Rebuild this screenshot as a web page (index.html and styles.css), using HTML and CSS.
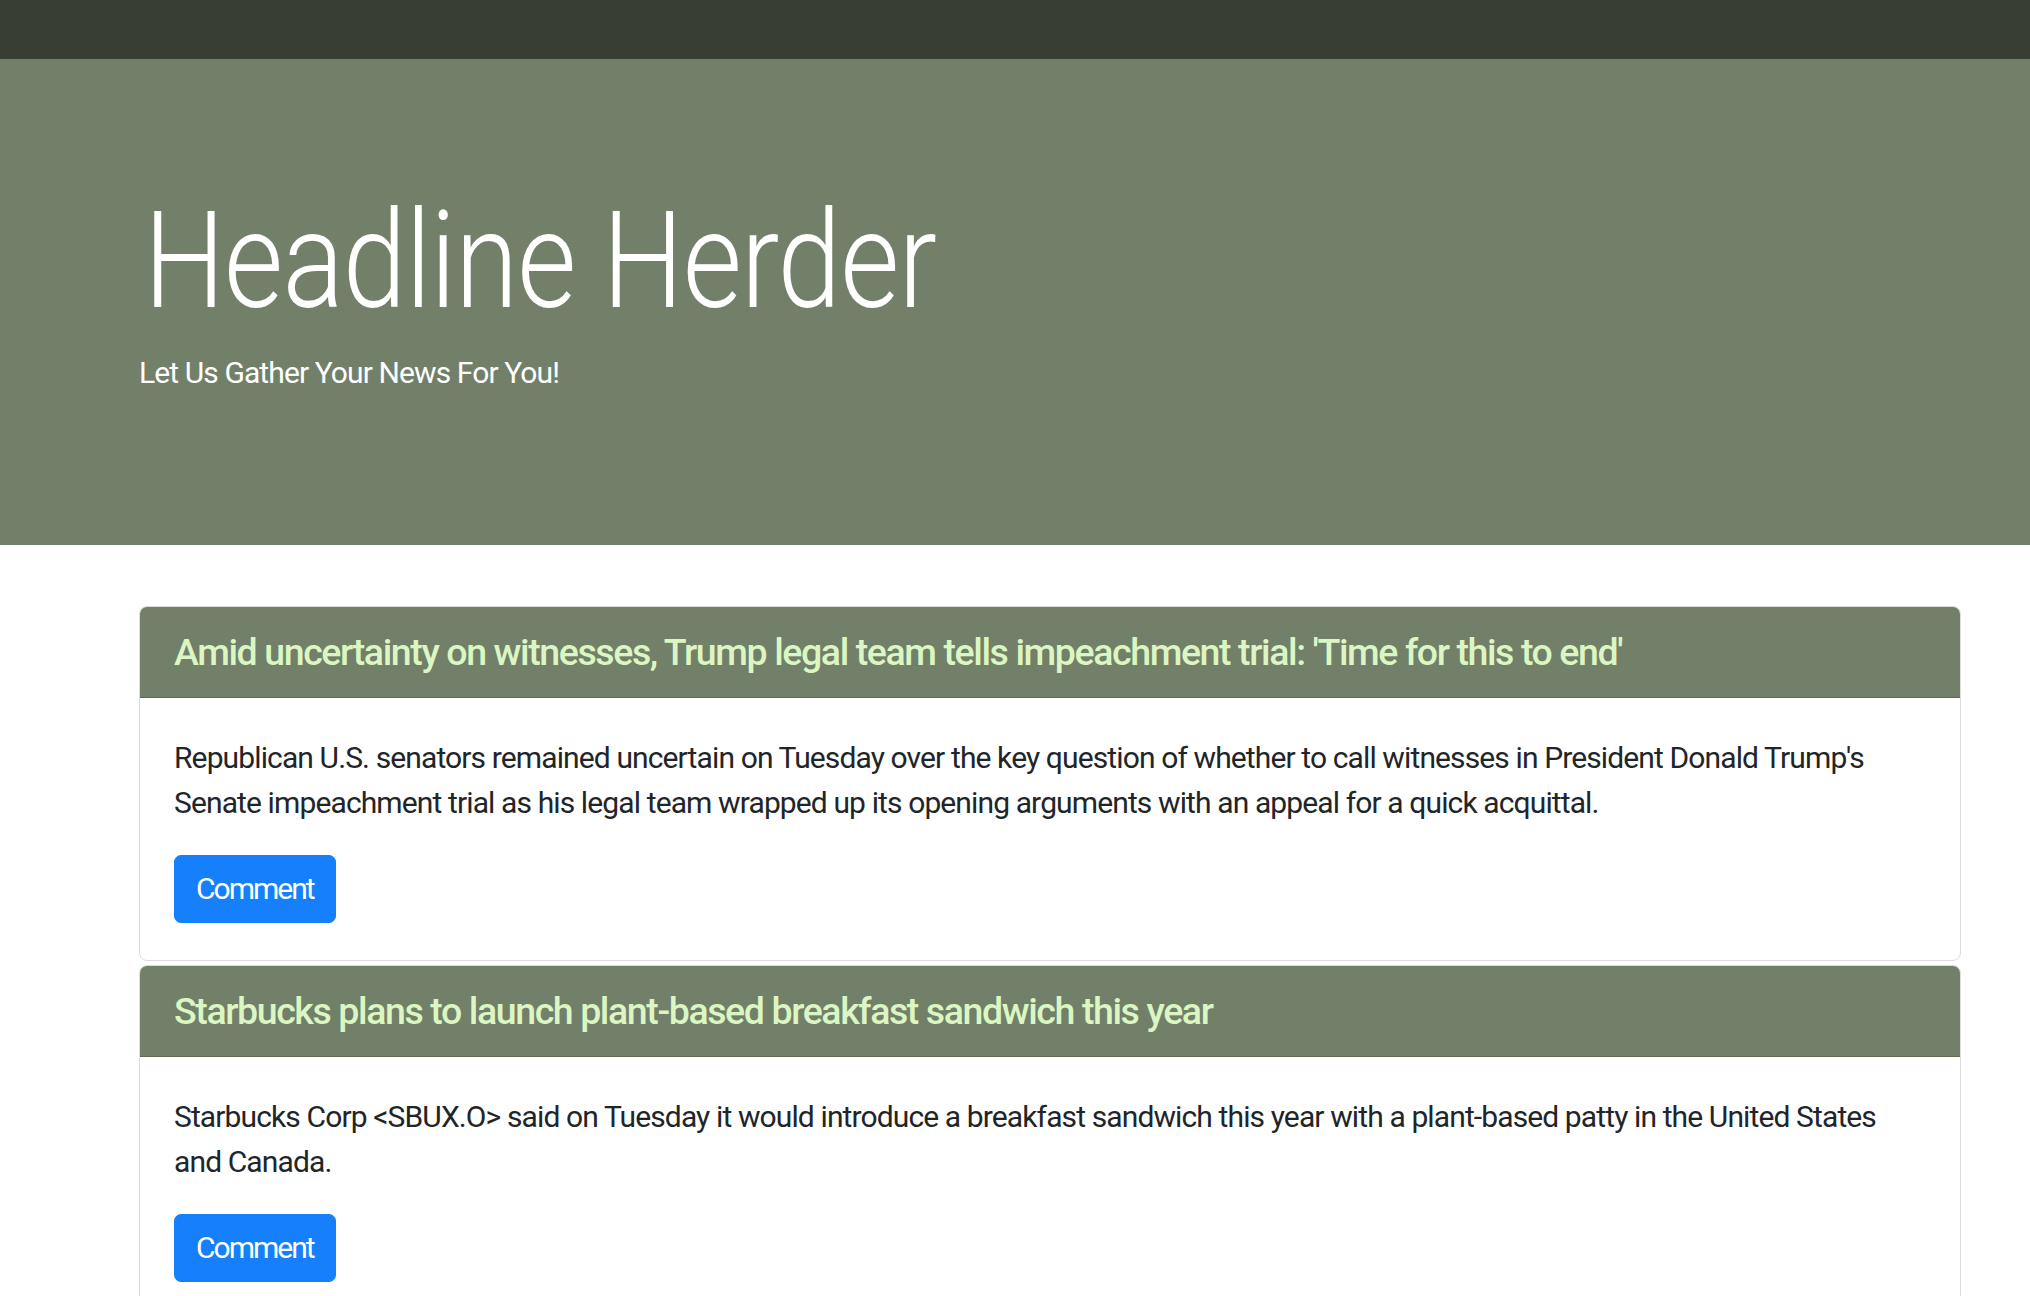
FILE: index.html
```html
<!DOCTYPE html>
<html lang="en">
<head>
<meta charset="utf-8">
<title>Headline Herder</title>
<link rel="stylesheet" href="styles.css">
</head>
<body>
  <nav class="topbar"></nav>
  <header class="jumbo">
    <div class="jumbo-inner">
      <h1 class="display">Headline Herder</h1>
      <p class="lead">Let Us Gather Your News For You!</p>
    </div>
  </header>
  <main class="articles">
    <section class="card">
      <div class="card-header">
        <h5 class="card-title">Amid uncertainty on witnesses, Trump legal team tells impeachment trial: 'Time for this to end'</h5>
      </div>
      <div class="card-body">
        <p class="card-text">Republican U.S. senators remained uncertain on Tuesday over the key question of whether to call witnesses in President Donald Trump's Senate impeachment trial as his legal team wrapped up its opening arguments with an appeal for a quick acquittal.</p>
        <button class="btn" type="button">Comment</button>
      </div>
    </section>
    <section class="card">
      <div class="card-header">
        <h5 class="card-title">Starbucks plans to launch plant-based breakfast sandwich this year</h5>
      </div>
      <div class="card-body">
        <p class="card-text">Starbucks Corp &lt;SBUX.O&gt; said on Tuesday it would introduce a breakfast sandwich this year with a plant-based patty in the United States and Canada.</p>
        <button class="btn" type="button">Comment</button>
      </div>
    </section>
  </main>
</body>
</html>
```

FILE: styles.css
```css
* { box-sizing: border-box; }

html, body {
  margin: 0;
  padding: 0;
  background: #ffffff;
}

body {
  font-family: Roboto, "Liberation Sans", Arial, sans-serif;
  color: #212529;
  font-size: 30px;
  line-height: 45px;
}

.topbar {
  height: 59px;
  background: #383e34;
}

.jumbo {
  background: #727f69;
  padding: 121px 0 150px;
}

.jumbo-inner {
  margin: 0 69px 0 139px;
}

.display {
  margin: 0 0 8px 5px;
  font-size: 135px;
  line-height: 162px;
  font-weight: 300;
  color: #ffffff;
  letter-spacing: -1px;
  transform: scaleX(0.847);
  transform-origin: left center;
  white-space: nowrap;
}

.lead {
  margin: 0;
  font-size: 30px;
  line-height: 45px;
  color: #ffffff;
  letter-spacing: -0.9px;
}

.articles {
  margin: 61px 69px 0 139px;
  display: flex;
  flex-direction: column;
  gap: 4px;
}

.card {
  border: 1px solid #dcdcdc;
  border-radius: 8px;
  background: #ffffff;
  overflow: hidden;
}

.card-header {
  background: #727f69;
  border-bottom: 1px solid #5c684f;
  padding: 23px 34px 22px;
}

.card-title {
  margin: 0;
  font-size: 37.5px;
  line-height: 45px;
  font-weight: 500;
  color: #dbf6c2;
  letter-spacing: -1.4px;
}

.card-body {
  padding: 37px 34px 37px;
}

.card-text {
  margin: 0 0 30px;
  letter-spacing: -0.88px;
}

.btn {
  display: inline-block;
  font-family: inherit;
  font-size: 30px;
  line-height: 44px;
  letter-spacing: -2px;
  padding: 11px 21px;
  color: #ffffff;
  background: #167ffb;
  border: 1px solid #167ffb;
  border-radius: 7px;
  cursor: pointer;
}
```
